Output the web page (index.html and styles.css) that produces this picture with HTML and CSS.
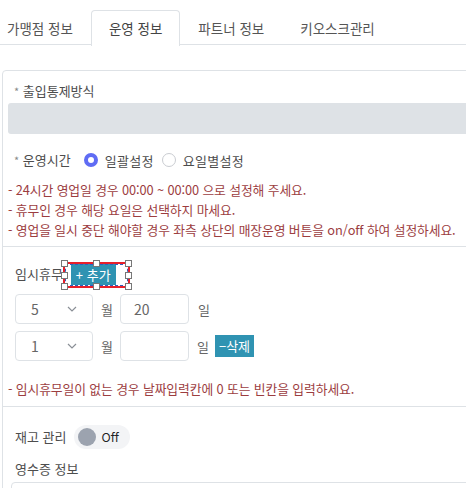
FILE: index.html
```html
<!DOCTYPE html>
<html lang="ko">
<head>
<meta charset="utf-8">
<link rel="stylesheet" href="styles.css">
</head>
<body>
<div class="page">
  <div class="tabs">
    <div class="tab first">가맹점 정보</div>
    <div class="tab active">운영 정보</div>
    <div class="tab">파트너 정보</div>
    <div class="tab">키오스크관리</div>
  </div>

  <div class="card">
    <div class="section s1">
      <div class="label"><span class="ast">*</span> 출입통제방식</div>
      <div class="greybox"></div>
      <div class="hours">
        <span class="label inline"><span class="ast">*</span> 운영시간</span>
        <span class="radio checked"></span><span class="rtext">일괄설정</span>
        <span class="radio"></span><span class="rtext">요일별설정</span>
      </div>
      <div class="notes">
        <div>- 24시간 영업일 경우 00:00 ~ 00:00 으로 설정해 주세요.</div>
        <div>- 휴무인 경우 해당 요일은 선택하지 마세요.</div>
        <div>- 영업을 일시 중단 해야할 경우 좌측 상단의 매장운영 버튼을 on/off 하여 설정하세요.</div>
      </div>
    </div>

    <div class="section s2">
      <div class="holiday-head">
        <span class="label inline">임시휴무</span>
        <span class="btn-wrap">
          <span class="btn">+ 추가</span>
          <span class="sel-overlay">
            <i class="h tl"></i><i class="h tm"></i><i class="h tr"></i>
            <i class="h ml"></i><i class="h mr"></i>
            <i class="h bl"></i><i class="h bm"></i><i class="h br"></i>
          </span>
        </span>
      </div>
      <div class="drow">
        <div class="select"><span>5</span><svg width="12" height="8" viewBox="0 0 12 8"><path d="M2 2l4 4 4-4" fill="none" stroke="#8a8f96" stroke-width="1.2"/></svg></div>
        <span class="unit">월</span>
        <div class="input">20</div>
        <span class="unit">일</span>
      </div>
      <div class="drow">
        <div class="select"><span>1</span><svg width="12" height="8" viewBox="0 0 12 8"><path d="M2 2l4 4 4-4" fill="none" stroke="#8a8f96" stroke-width="1.2"/></svg></div>
        <span class="unit">월</span>
        <div class="input"></div>
        <span class="unit">일</span>
        <span class="btn del">−삭제</span>
      </div>
      <div class="notes single">
        <div>- 임시휴무일이 없는 경우 날짜입력칸에 0 또는 빈칸을 입력하세요.</div>
      </div>
    </div>

    <div class="section s3">
      <div class="stock">
        <span class="label inline">재고 관리</span>
        <span class="toggle"><span class="knob"></span><span class="off">Off</span></span>
      </div>
      <div class="label receipt">영수증 정보</div>
      <div class="receipt-box"></div>
    </div>
  </div>
</div>
</body>
</html>
```

FILE: styles.css
```css
html, body {
  margin: 0;
  padding: 0;
  background: #fff;
  overflow: hidden;
}
body {
  font-family: "Noto Sans CJK KR", "Noto Sans", sans-serif;
  color: #555;
  width: 466px;
  height: 488px;
}
.page {
  width: 466px;
  height: 488px;
  overflow: hidden;
}
.tabs {
  display: flex;
  padding-top: 10px;
  border-bottom: 1px solid #dee2e6;
  height: 34px;
  box-sizing: content-box;
}
.tab {
  padding: 0 17px;
  font-size: 13.5px;
  line-height: 34px;
  color: #555;
  border: 1px solid transparent;
  border-bottom: none;
}
.tab.first { margin-left: -11px; }
.tab.active {
  border-color: #dee2e6;
  border-radius: 4px 4px 0 0;
  background: #fff;
  margin-bottom: -1px;
  height: 35px;
  color: #444;
}
.card {
  margin: 25px -20px 0 2px;
  border: 1px solid #dee2e6;
  border-radius: 4px;
}
.section { padding: 0 0 0 5px; }
.section + .section { border-top: 1px solid #dee2e6; }
.label {
  font-size: 13px;
  color: #4d4d4d;
  padding-left: 6px;
  line-height: 20px;
}
.label.inline { padding-left: 0; }
.ast { color: #888; font-size: 11px; }
.s1 { padding-top: 10px; padding-bottom: 6px; }
.greybox {
  margin-top: 2px;
  height: 31px;
  background: #dee2e6;
  border-radius: 3px 0 0 3px;
}
.hours {
  display: flex;
  align-items: center;
  margin-top: 16px;
  padding-left: 6px;
  height: 20px;
}
.hours .label { margin-right: 13px; }
.radio {
  width: 14px;
  height: 14px;
  border-radius: 50%;
  border: 1px solid #c9ccd1;
  box-sizing: border-box;
  margin-right: 7px;
}
.radio.checked { border: 4px solid #5f6cf4; }
.rtext { font-size: 13px; color: #4d4d4d; margin-right: 8px; letter-spacing: 0.3px; }
.notes {
  margin-top: 10px;
  font-size: 12.8px;
  line-height: 20px;
  color: #9c3d3f;
  padding-left: 0;
}
.notes > div { white-space: nowrap; letter-spacing: -0.1px; }
.s2 { padding-top: 16px; padding-left: 12px; padding-bottom: 7px; }
.holiday-head { display: flex; align-items: center; height: 22px; }
.btn-wrap {
  position: relative;
  display: inline-flex;
  margin-left: 8px;
  padding-right: 14px;
}
.btn {
  background: #2f93b2;
  color: #fff;
  font-size: 13px;
  line-height: 21px;
  padding: 0 5px;
}
.sel-overlay {
  position: absolute;
  left: -8px;
  right: 0;
  top: -2px;
  bottom: -3px;
  border: 2px solid #e8202a;
  outline: 1px dashed #3060c0;
  outline-offset: -3px;
}
.sel-overlay .h {
  position: absolute;
  width: 5px;
  height: 5px;
  background: #fff;
  border: 1px solid #777;
}
.h.tl { left: -4px; top: -4px; }
.h.tm { left: calc(50% - 3px); top: -4px; }
.h.tr { right: -4px; top: -4px; }
.h.ml { left: -4px; top: calc(50% - 3px); }
.h.mr { right: -4px; top: calc(50% - 3px); }
.h.bl { left: -4px; bottom: -4px; }
.h.bm { left: calc(50% - 3px); bottom: -4px; }
.h.br { right: -4px; bottom: -4px; }
.drow {
  display: flex;
  align-items: center;
  margin-top: 9px;
}
.drow + .drow { margin-top: 7px; }
.select {
  width: 78px;
  height: 30px;
  box-sizing: border-box;
  border: 1px solid #dee2e6;
  border-radius: 4px;
  display: flex;
  align-items: center;
  justify-content: space-between;
  padding: 0 14px 0 15px;
  font-size: 14px;
  color: #666;
}
.unit { font-size: 13px; color: #666; margin: 0 7px 0 8px; }
.input {
  width: 69px;
  height: 30px;
  box-sizing: border-box;
  border: 1px solid #dee2e6;
  border-radius: 4px;
  font-size: 14px;
  color: #666;
  line-height: 28px;
  padding-left: 13px;
}
.drow .unit:last-of-type { margin-left: 9px; }
.btn.del { margin-left: -1px; padding: 0 4px; font-size: 13px; line-height: 22px; }
.notes.single { margin-top: 18px; margin-left: -7px; }
.s3 { padding-top: 18px; padding-left: 12px; }
.stock { display: flex; align-items: center; height: 24px; }
.stock .label { margin-right: 8px; }
.toggle {
  display: inline-flex;
  align-items: center;
  width: 56px;
  height: 24px;
  border-radius: 12px;
  background: #f3f4f6;
  box-sizing: border-box;
  padding-left: 4px;
}
.knob {
  width: 18px;
  height: 18px;
  border-radius: 50%;
  background: #9ca3af;
}
.off {
  font-family: "Inter", "Noto Sans", sans-serif;
  font-size: 12px;
  color: #222;
  margin-left: 5px;
}
.label.receipt { padding-left: 0; margin-top: 10px; }
.receipt-box {
  margin: 3px 0 0 -4px;
  height: 20px;
  border: 1px solid #dee2e6;
  border-radius: 4px 0 0 0;
}
```
